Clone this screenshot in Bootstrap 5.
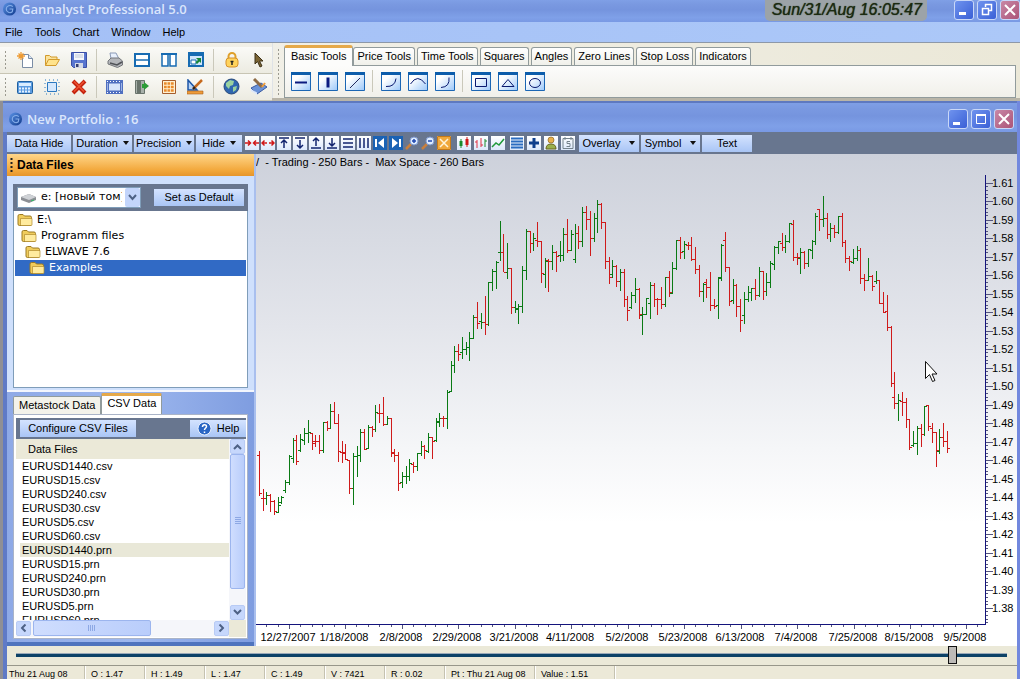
<!DOCTYPE html>
<html lang="en">
<head>
<meta charset="utf-8">
<meta name="viewport" content="width=device-width, initial-scale=1">
<title>Gannalyst Professional 5.0</title>
<link href="https://cdn.jsdelivr.net/npm/bootstrap@5.3.0/dist/css/bootstrap.min.css" rel="stylesheet">
<style>
:root{--slate:#68768f;--beige:#ebe9d8;--edge:#7f9db9}
body{font-family:"Liberation Sans",Arial,sans-serif;font-size:11px;line-height:14px;color:#000;background:var(--beige)}
button,select,input{font:inherit;color:inherit}
button{border:0;background:none;padding:0;white-space:nowrap}
svg{display:block;flex:none}
.caption{background:linear-gradient(#7f9fe6 0,#7a99e1 18%,#7594de 45%,#7fa0e8 80%,#7999e4 100%);color:#dbe6fc;font:600 13px/16px "Open Sans","Trebuchet MS",sans-serif}
.cap-main{height:22px;padding-left:2px}
.cap-child{height:32px;padding:3px 3px 0 8px;border-top:2px solid #5e79c0}
.stamp{background:#9ca3a8;border-radius:0 0 5px 5px;color:#1b2a10;font:italic 16px/20px "Liberation Sans",sans-serif;height:21px;padding:0 5px 0 7px;margin-right:27px;text-shadow:0 0 1px #1b2a10;white-space:nowrap}
.winbtn{width:20px;height:20px;border:1px solid #c9d8f8;border-radius:3px;background:linear-gradient(135deg,#6f93ee,#3a60d6)}
.winbtn.shut{background:linear-gradient(135deg,#c888a6,#ac5478)}
.menubar{height:20px;background:linear-gradient(90deg,#a4c0f6,#acc8f8);padding-left:5px;gap:12px}
.menubar a{color:#000;text-decoration:none;line-height:20px}
.tooldock{height:59px;border-top:1px solid #8d98a8;border-bottom:3px solid #b9b5a8;background:linear-gradient(90deg,#f3f2ec,#ebe8d8)}
.toolrow{height:27px;padding-left:4px;border-bottom:1px solid #c8c5b4;background:linear-gradient(#fafaf7,#ecebe1)}
.grip{width:3px;height:20px;background:radial-gradient(circle,#9a998f 1px,transparent 1px) 0 0/3px 4px}
.tool{width:27px;height:26px;display:flex;align-items:center;justify-content:center}
.vline{width:1px;height:22px;background:#cac8ba;margin:0 4px}
.tooltabs{padding:1px 4px 0 4px}
.tabline{height:21px;gap:2px}
.ttab{height:18px;border:1px solid #919b9c;border-bottom:0;border-radius:3px 3px 0 0;background:linear-gradient(#fff,#f0f0ea);padding:0 3px}
.ttab.on{height:21px;background:#fcfcfb;border-top:3px solid #e5a94a;margin-bottom:-1px;padding:0 6px 2px;position:relative}
.ttab.on + .ttab{margin-left:-2px}
.toolpane{border:1px solid #919b9c;background:linear-gradient(#fcfcfb,#f1f0ea);height:33px;padding-left:2px}
.childwin{border-left:3px solid #8f8f95;border-right:3px solid #7288de;background:#5f7ac6;min-height:0}
.inner{margin-left:4px;min-height:0}
.slatebar{background:var(--slate);height:22px;gap:2px}
.xpbtn{height:17px;background:linear-gradient(#d4e3ff,#a9c5f5);display:flex;align-items:center;justify-content:center;gap:5px}
.caret{border:3px solid transparent;border-top:4px solid #111;border-bottom:0}
.mini{width:14px;height:14px;background:linear-gradient(#fff,#dce8fb);display:flex;align-items:center;justify-content:center}
.mini.bare{background:none}
.side{width:249px;background:linear-gradient(90deg,#8ea9e6,#9db7ee 50%,#7f9de0);border-right:2px solid #a9bfee;min-height:0}
.sidehead{height:22px;background:linear-gradient(#ffd68a,#f2a73a 75%,#e6952b);font:bold 12px/22px "Liberation Sans",sans-serif;padding-left:3px;gap:4px}
.drivebox{background:#cfe0fc;padding:8px 6px 2px}
.drivebar{height:27px;background:var(--slate);padding:0 4px}
.drive{width:124px;height:21px;position:relative}
.drive select{appearance:none;width:100%;height:21px;border:1px solid var(--edge);border-radius:0;background:#fff;padding:0 18px 0 23px;font:11px/18px "DejaVu Sans",Verdana,sans-serif}
.drive .disk{position:absolute;left:3px;top:5px;pointer-events:none}
.drive .drop{position:absolute;right:1px;top:1px;pointer-events:none}
.tree{height:177px;background:#fff;border:1px solid var(--edge);border-top:0;padding:1px;font:11px/16px "DejaVu Sans",Verdana,sans-serif}
.tree button{display:flex;align-items:center;gap:4px;width:100%;height:16px}
.tree .l0{padding-left:2px}.tree .l1{padding-left:6px}.tree .l2{padding-left:10px}.tree .l3{padding-left:14px}
.tree .sel{background:#316ac5;color:#fff}
.lower{padding:1px 6px 3px;min-height:0;border-top:2px solid #f3f6fd;border-bottom:4px solid #4f74be}
.dtab{background:#f3f2ea;border:1px solid #919b9c;border-bottom:0;border-radius:2px 2px 0 0;height:18px;padding:0 5px}
.dtab.on{background:#fff;border-top:3px solid #e5a94a;height:21px;padding:0 5px 4px}
.sheet{background:#fff;border:1px solid #aab4c8;padding:3px 1px 1px 2px;min-height:0}
.files{width:100%;border-collapse:collapse}
.files th{background:var(--beige);height:20px;font-weight:400;padding:0 12px;text-align:left}
.files td{height:14px;padding:0 6px;line-height:14px}
.files .sel{background:linear-gradient(#e9e8d8,#e9e8d8) 4px 0 no-repeat}
.sb{background:#f5f6fa}
.sbtn{width:15px;height:15px;border-radius:2px;border:1px solid #b8cbf5;background:#c6d7fc;display:flex;align-items:center;justify-content:center}
.thumb{background:linear-gradient(90deg,#cfddfe,#b9cdfb);border:1px solid #9cb5ee;border-radius:2px;display:flex;align-items:center;justify-content:center}
.chart{background:linear-gradient(#cdd1db,#e3e5eb 35%,#f5f6f8 60%,#fff 75%);min-width:0;overflow:hidden}
.chart text{font:11px "Liberation Sans",sans-serif}
.slide{height:21px;padding:0 10px 0 9px;border-bottom:1px solid #98978a;background:var(--beige)}
.slide input{appearance:none;width:100%;height:18px;margin:0;background:linear-gradient(#9aa9b8,#9aa9b8) 0 7px/100% 1px no-repeat,linear-gradient(#0d4267,#0d4267) 0 8px/100% 3px no-repeat;display:block}
.slide input::-webkit-slider-thumb{appearance:none;width:9px;height:18px;background:#bdbbb8;border:1px solid #111;border-radius:0}
.stat{height:13px;overflow:hidden;background:#ece9d8;padding-left:2px;font:9px/16px "Liberation Sans",sans-serif;white-space:nowrap}
.stat span{width:60px;padding-left:6px;border-left:1px solid #c5c2b0;box-shadow:inset 1px 0 #fff;flex:none;height:16px}
.stat .day{width:75px;padding-left:0;border:0;box-shadow:none}
</style>
</head>
<body class="vh-100 overflow-hidden d-flex flex-column">
<svg width="0" height="0" class="position-absolute">
<defs>
<linearGradient id="ball" x1="0" y1="0" x2="1" y2="1"><stop offset="0" stop-color="#5b93e6"/><stop offset="1" stop-color="#103a8c"/></linearGradient>
<linearGradient id="tile" x1="0" y1="0" x2="1" y2="1"><stop offset=".3" stop-color="#fff"/><stop offset="1" stop-color="#9cc8fa"/></linearGradient>
<symbol id="logo" viewBox="0 0 16 16"><circle cx="8" cy="8" r="7" fill="url(#ball)"/><path d="M11.500 5.500C9 3 4.500 4.500 4.500 8s4 5 6.500 3l.5-3H8" fill="none" stroke="#86aeea" stroke-width="1.200"/></symbol>
<symbol id="frame" viewBox="0 0 20 19"><path d="M.5.500h19v18H.5z" fill="url(#tile)" stroke="#1b66b4"/><path d="M0 0h20v3H0z" fill="#0d5dab"/></symbol>
<symbol id="folder" viewBox="0 0 16 14"><path d="M1 3q0-1.500 1.500-1.500h3.500l1.500 1.500H13q1.500 0 1.500 1.500V11q0 1.500-1.500 1.500H2.500Q1 12.500 1 11z" fill="#f0cc5c" stroke="#9c7a22"/><path d="M3.500 5.500h11.500v6q0 1-1 1H4.500q-1 0-1-1z" fill="#ffeb9e" stroke="#b08a2c" stroke-width=".7"/></symbol>
<symbol id="up" viewBox="0 0 9 6"><path d="M1 5l3.500-3.500L8 5" fill="none" stroke="#4d6185" stroke-width="2"/></symbol>
</defs>
</svg>

<header class="caption cap-main d-flex align-items-start flex-none">
  <div class="d-flex align-items-center gap-1 me-auto pt-0"><svg width="15" height="18"><use href="#logo"/></svg><span>Gannalyst Professional 5.0</span></div>
  <div class="stamp">Sun/31/Aug 16:05:47</div>
  <div class="d-flex" style="gap:3px">
    <button class="winbtn" aria-label="Minimize"><svg width="18" height="18"><path d="M4 11h7v3H4z" fill="#fff"/></svg></button>
    <button class="winbtn" aria-label="Restore"><svg width="18" height="18"><path d="M7.500 6V3.500h6v6H11M4.500 7.500h6v6h-6z" fill="none" stroke="#fff" stroke-width="1.500"/></svg></button>
    <button class="winbtn shut" aria-label="Close"><svg width="18" height="18"><path d="M4 4l10 10M14 4L4 14" stroke="#fff" stroke-width="2"/></svg></button>
  </div>
</header>
<nav class="menubar d-flex"><a href="#">File</a><a href="#">Tools</a><a href="#">Chart</a><a href="#">Window</a><a href="#">Help</a></nav>

<div class="tooldock d-flex">
  <div class="border-end pt-1">
    <div class="toolrow d-flex align-items-center">
      <div class="grip me-1"></div>
      <button class="tool" aria-label="New"><svg width="16" height="16"><path d="M5.500 2.500h6l4 4v9h-10z" fill="#fff" stroke="#7b8da5"/><path d="M11.500 2.500v4h4" fill="#dbe6f5" stroke="#7b8da5"/><path d="M4 0v8M0 4h8M1.500 1.500l5 5M6.500 1.500l-5 5" stroke="#ee9b33" stroke-width="1.300"/></svg></button>
      <button class="tool" aria-label="Open"><svg width="16" height="16"><path d="M1.500 13.500V3.500h4l1.500 1.500h6v2.500" fill="#fbe29a" stroke="#d29a2c"/><path d="M1.500 13.500l3-6h11l-3.500 6z" fill="#ffe38c" stroke="#d29a2c"/></svg></button>
      <button class="tool" aria-label="Save"><svg width="16" height="16"><path d="M.5.500h15v15H2.500l-2-2z" fill="#5875cf" stroke="#3b4fa5"/><path d="M3 1h10v7H3z" fill="#f5f7fb"/><path d="M4 3h8M4 5h8" stroke="#c0c8d8"/><path d="M4 11h8v5H4z" fill="#d5d9e6"/><path d="M5 12h2.500v3H5z" fill="#333d70"/></svg></button>
      <div class="vline"></div>
      <button class="tool" aria-label="Print"><svg width="16" height="16"><path d="M4 7l-1-6h6l3 6z" fill="#e8f0fd" stroke="#8a99b5"/><path d="M1 9l3-3h8l3.500 3v4l-5 2.500L1 12z" fill="#b4b6ba" stroke="#74767a"/><path d="M3 11l7 2 5-3" fill="none" stroke="#505257" stroke-width="1.500"/></svg></button>
      <button class="tool" aria-label="Split rows"><svg width="16" height="14"><path d="M1 1h14v12H1z" fill="#fff" stroke="#176bb2" stroke-width="2"/><path d="M1 7h14" stroke="#176bb2" stroke-width="1.500"/></svg></button>
      <button class="tool" aria-label="Split columns"><svg width="16" height="14"><path d="M1 1h6v12H1zM9 1h6v12H9z" fill="#fff" stroke="#176bb2" stroke-width="1.500"/><path d="M0 1h16" stroke="#176bb2" stroke-width="2"/></svg></button>
      <button class="tool" aria-label="Cascade"><svg width="16" height="15"><path d="M1 1h14v13H1z" fill="#cfe5fb" stroke="#176bb2" stroke-width="2"/><path d="M0 2h16" stroke="#176bb2" stroke-width="4"/><path d="M3 8h5v4H3z" fill="#fff" stroke="#176bb2"/><path d="M8 6h5v5l-1.500-1.500L9 12 7.500 10 10 8z" fill="#16863a"/></svg></button>
      <div class="vline"></div>
      <button class="tool" aria-label="Lock"><svg width="14" height="16"><path d="M3.500 7V4.500a3.500 3.500 0 017 0V7" fill="none" stroke="#dfa02a" stroke-width="2"/><rect x="1" y="6" width="12" height="9" rx="3" fill="#ffd35c" stroke="#d6912a"/><path d="M7 9v4M5.500 9.500h3" stroke="#222" stroke-width="1.500"/></svg></button>
      <button class="tool" aria-label="Select"><svg width="12" height="16"><path d="M2 1v11l2.500-2.500L7 15l2-1-2.500-5H10z" fill="#7a6433" stroke="#3d3118"/></svg></button>
    </div>
    <div class="toolrow d-flex align-items-center">
      <div class="grip me-1"></div>
      <button class="tool" aria-label="Calculator"><svg width="16" height="14"><rect x=".5" y="1.500" width="15" height="12" rx="1" fill="#5b9be0" stroke="#20609f"/><path d="M2 3h12v3H2z" fill="#d9edff"/><path d="M2 8.500h12M2 11.500h12" stroke="#e3f1ff" stroke-width="2" stroke-dasharray="2 1"/></svg></button>
      <button class="tool" aria-label="Region"><svg width="16" height="16"><path d="M3.500 3.500h9v9h-9z" fill="#d5e8fd" stroke="#2a78c0"/><path d="M1 1h14v14H1z" fill="none" stroke="#2a78c0" stroke-dasharray="1 3"/></svg></button>
      <button class="tool" aria-label="Delete"><svg width="16" height="16"><path d="M2 2l12 12M14 2L2 14" stroke="#c4240f" stroke-width="4"/><path d="M3 2.500l10 10M13 2.500l-10 10" stroke="#ee5030" stroke-width="1.500"/></svg></button>
      <div class="vline"></div>
      <button class="tool" aria-label="Film"><svg width="17" height="14"><path d="M0 0h17v14H0z" fill="#4f6fc0"/><path d="M3 3.500h11v7H3z" fill="#d7e5fb"/><path d="M1 1.500h15M1 12.500h15" stroke="#fff" stroke-dasharray="1 2"/><path d="M1.500 3v8M15.500 3v8" stroke="#9fb4e4"/></svg></button>
      <button class="tool" aria-label="Exit"><svg width="15" height="16"><path d="M1.500 1.500h9v13h-9z" fill="#a8b0aa" stroke="#69736b"/><path d="M3 2h4v12l-4 1z" fill="#69736b"/><path d="M8 5h2V3l5 4-5 4V9H8z" fill="#2c9c37"/></svg></button>
      <button class="tool" aria-label="Grid"><svg width="14" height="14"><path d="M.5.500h13v13H.5z" fill="#fff1d2" stroke="#a65d2b"/><path d="M2 3.500h10M2 7h10M2 10.500h10" stroke="#e98a2c" stroke-width="2.500" stroke-dasharray="2.700 .8"/></svg></button>
      <button class="tool" aria-label="Draw"><svg width="17" height="16"><path d="M1 1v10h9z" fill="#b7d3f5" stroke="#1c55a6" stroke-width="1.500"/><path d="M15 1L6 10" stroke="#c66a1e" stroke-width="2.500"/><path d="M8 8l-2 2" stroke="#222" stroke-width="2"/><path d="M0 12h16v3H0z" fill="#ee9c3a" stroke="#a85f1b" stroke-width=".6"/></svg></button>
      <div class="vline"></div>
      <button class="tool" aria-label="Web"><svg width="17" height="17"><circle cx="8.500" cy="8.500" r="7.500" fill="#2f66b0" stroke="#294a78"/><path d="M3 5l4-3 4 1-1 4-3 1-1 3-3-3zM10 9l4-1-1 4-3 2z" fill="#9ad2a0"/></svg></button>
      <button class="tool" aria-label="Notebook"><svg width="18" height="17"><path d="M1 10l10-5 6 4-10 7z" fill="#6b93d8" stroke="#3a5ba2"/><path d="M1 11v2l6 3.500v-2z" fill="#dbe7fb"/><path d="M4 1l8 8" stroke="#8e6b45" stroke-width="3"/><path d="M12 9l3-4" stroke="#ee9c3a" stroke-width="2"/></svg></button>
    </div>
  </div>
  <div class="tooltabs d-flex flex-grow-1">
    <div class="grip mt-1 me-1" style="height:48px"></div>
    <div class="flex-grow-1">
      <div class="tabline d-flex align-items-end">
        <button class="ttab on">Basic Tools</button><button class="ttab">Price Tools</button><button class="ttab">Time Tools</button><button class="ttab">Squares</button><button class="ttab">Angles</button><button class="ttab">Zero Lines</button><button class="ttab">Stop Loss</button><button class="ttab">Indicators</button>
      </div>
      <div class="toolpane d-flex align-items-center" id="shapes"></div>
    </div>
  </div>
</div>

<main class="childwin d-flex flex-column flex-grow-1">
  <div class="caption cap-child d-flex align-items-center">
    <svg width="15" height="16" class="me-1" style="margin-left:-3px"><use href="#logo"/></svg><span class="me-auto">New Portfolio : 16</span>
    <div class="d-flex" style="gap:3px">
      <button class="winbtn" aria-label="Minimize chart"><svg width="18" height="18"><path d="M4 12h7v3H4z" fill="#fff"/></svg></button>
      <button class="winbtn" aria-label="Maximize chart"><svg width="18" height="18"><path d="M4.500 4.500h9v9h-9z" fill="none" stroke="#fff"/><path d="M4 5h10" stroke="#fff" stroke-width="2"/></svg></button>
      <button class="winbtn shut" aria-label="Close chart"><svg width="18" height="18"><path d="M4 4l10 10M14 4L4 14" stroke="#fff" stroke-width="2"/></svg></button>
    </div>
  </div>
  <div class="inner d-flex flex-column flex-grow-1">
    <div class="slatebar d-flex align-items-center">
      <button class="xpbtn" style="width:64px">Data Hide</button>
      <button class="xpbtn" style="width:59px">Duration <i class="caret"></i></button>
      <button class="xpbtn" style="width:60px">Precision <i class="caret"></i></button>
      <button class="xpbtn" style="width:46px">Hide <i class="caret"></i></button>
      <div class="d-flex" id="minis" style="gap:2px;margin:0 4px 0 1px"></div>
      <div class="d-flex" id="minis2" style="gap:3px;margin-right:3px"></div>
      <div class="d-flex" id="minis3" style="gap:3px;margin-right:2px"></div>
      <button class="xpbtn" style="width:60px">Overlay <i class="caret ms-1"></i></button>
      <button class="xpbtn" style="width:59px">Symbol <i class="caret ms-1"></i></button>
      <button class="xpbtn" style="width:50px">Text</button>
    </div>
    <div class="d-flex flex-grow-1" style="min-height:0">
      <aside class="side d-flex flex-column flex-shrink-0">
        <div class="sidehead d-flex align-items-center"><svg width="3" height="15"><path d="M1.500 1v14" stroke="#222" stroke-width="2" stroke-dasharray="2 2"/></svg>Data Files</div>
        <div class="drivebox">
          <div class="drivebar d-flex align-items-center justify-content-between">
            <div class="drive">
              <select aria-label="Drive"><option>e: [новый том]</option></select>
              <svg class="disk" width="17" height="12"><path d="M1 5l8-3 7 3v3l-7 3-8-3z" fill="#8c8f94"/><path d="M1 5l8-3 7 3-7 3z" fill="#cfd2d6"/><path d="M11 9l3-1" stroke="#3b6" stroke-width="1"/></svg>
              <svg class="drop" width="15" height="19"><rect width="15" height="19" rx="2" fill="#c3d5fb"/><path d="M4 7l3.500 4L11 7" fill="none" stroke="#4d6185" stroke-width="2"/></svg>
            </div>
            <button class="xpbtn" style="width:90px">Set as Default</button>
          </div>
          <div class="tree">
            <button class="l0"><svg width="16" height="14"><use href="#folder"/></svg>E:\</button>
            <button class="l1"><svg width="16" height="14"><use href="#folder"/></svg>Programm files</button>
            <button class="l2"><svg width="16" height="14"><use href="#folder"/></svg>ELWAVE 7.6</button>
            <button class="l3 sel"><svg width="16" height="14"><use href="#folder"/></svg>Examples</button>
          </div>
        </div>
        <div class="lower d-flex flex-column flex-grow-1">
          <div class="d-flex align-items-end"><button class="dtab">Metastock Data</button><button class="dtab on">CSV Data</button></div>
          <div class="sheet d-flex flex-column flex-grow-1">
            <div class="slatebar d-flex align-items-center justify-content-between" style="padding-left:4px">
              <button class="xpbtn" style="width:116px">Configure CSV Files</button>
              <button class="xpbtn" style="width:56px"><svg width="15" height="15"><circle cx="7.500" cy="7.500" r="6.500" fill="#2a66c4" stroke="#e8f0fd"/><path d="M5.500 6c0-3 4-3 4-.5 0 1.500-2 1.500-2 3.500M7.500 10.500v1.500" fill="none" stroke="#fff" stroke-width="1.500"/></svg>Help</button>
            </div>
            <div class="d-flex flex-grow-1 overflow-hidden" style="min-height:0">
              <div class="flex-grow-1 overflow-hidden d-flex flex-column">
              <div class="flex-grow-1 overflow-hidden">
                <table class="files"><thead><tr><th>Data Files</th></tr></thead><tbody>
                <tr><td>EURUSD1440.csv</td></tr><tr><td>EURUSD15.csv</td></tr><tr><td>EURUSD240.csv</td></tr><tr><td>EURUSD30.csv</td></tr><tr><td>EURUSD5.csv</td></tr><tr><td>EURUSD60.csv</td></tr>
                <tr><td class="sel">EURUSD1440.prn</td></tr><tr><td>EURUSD15.prn</td></tr><tr><td>EURUSD240.prn</td></tr><tr><td>EURUSD30.prn</td></tr><tr><td>EURUSD5.prn</td></tr><tr><td>EURUSD60.prn</td></tr>
                </tbody></table>
              </div>
              <div class="sb d-flex align-items-center" style="height:17px">
                <div class="sbtn"><svg width="9" height="6" style="rotate:-90deg"><use href="#up"/></svg></div>
                <div class="thumb" style="width:118px;height:16px;margin-left:2px"><svg width="8" height="6"><path d="M.5 0v6M2.500 0v6M4.500 0v6M6.500 0v6" stroke="#8da8e4"/></svg></div>
                <div class="sbtn ms-auto"><svg width="9" height="6" style="rotate:90deg"><use href="#up"/></svg></div>
              </div>
              </div>
              <div class="sb d-flex flex-column align-items-center" style="width:17px">
                <div class="sbtn"><svg width="9" height="6"><use href="#up"/></svg></div>
                <div class="thumb flex-grow-1 mb-3" style="width:15px"><svg width="6" height="8"><path d="M0 .5h6M0 2.500h6M0 4.500h6M0 6.500h6" stroke="#8da8e4"/></svg></div>
                <div class="sbtn"><svg width="9" height="6" style="rotate:180deg"><use href="#up"/></svg></div>
                <div style="height:17px;width:17px;background:#ebe9d8"></div>
              </div>
            </div>
          </div>
        </div>
      </aside>
      <section class="chart flex-grow-1"><svg id="plot" width="100%" height="100%" viewBox="0 0 761 490" preserveAspectRatio="xMinYMin meet" role="img" aria-label="Price chart"></svg></section>
    </div>
    <div class="slide"><input type="range" min="0" max="1000" value="949" aria-label="Scroll chart"></div>
    <footer class="stat d-flex"><span class="day">Thu 21 Aug 08</span><span>O : 1.47</span><span>H : 1.49</span><span>L : 1.47</span><span>C : 1.49</span><span>V : 7421</span><span>R : 0.02</span><span style="width:90px">Pt : Thu 21 Aug 08</span><span style="width:80px">Value : 1.51</span><span></span></footer>
  </div>
</main>

<script>
// Drawing tools of the "Basic Tools" tab
const shapes = [
  ['Horizontal line','<path d="M4 10.500h12" stroke="#0a1a80" stroke-width="2"/>'],
  ['Vertical line','<path d="M10 5.500v10" stroke="#0a1a80" stroke-width="3"/>'],
  ['Trend line','<path d="M5 16L15 6" stroke="#222a60"/>'],
  null,
  ['Arc','<path d="M5 14.500q9 .5 10-8" fill="none" stroke="#0a1a70"/>'],
  ['Half circle','<path d="M2.500 12q7-11 15 0" fill="none" stroke="#0a1a70"/>'],
  ['Quarter arc','<path d="M6 15.500q9-.5 8-10" fill="none" stroke="#0a1a70"/>'],
  null,
  ['Rectangle','<path d="M4.500 6.500h11v8h-11z" fill="none" stroke="#0a1a70"/>'],
  ['Triangle','<path d="M4 14.500h12L10 7.500z" fill="none" stroke="#0a1a70"/>'],
  ['Ellipse','<ellipse cx="10" cy="11" rx="5.500" ry="4.500" fill="none" stroke="#0a1a70"/>']];
document.getElementById('shapes').innerHTML = shapes.map(s => s
  ? `<button class="tool" aria-label="${s[0]}"><svg width="20" height="19"><use href="#frame"/>${s[1]}</svg></button>`
  : '<div class="vline"></div>').join('');

const mini = (inner, bare) => `<button class="mini${bare ? ' bare' : ''}" aria-label="Chart tool"><svg width="14" height="14">${inner}</svg></button>`;
const N = 'stroke="#12246e" stroke-width="1.500" fill="none"', R = 'stroke="#d01818" stroke-width="1.500" fill="none"';
const nav = d => `<path d="M0 0h14v14H0z" fill="#1a62b4"/>${d}`;
const lens = s => `<path d="M1 13l5-5" stroke="#c9803e" stroke-width="2.500"/><circle cx="9" cy="5" r="4" fill="#dcebff" stroke="#7d97cc"/><path d="${s}" stroke="#2048b0" stroke-width="1.500"/>`;
document.getElementById('minis').innerHTML = [
  mini(`<path d="M0 7h5M3 4.500L5.500 7 3 9.500M14 7H9M11 4.500L8.500 7l2.500 2.500" ${R}/>`),
  mini(`<path d="M1 7h5M3.500 4.500L1 7l2.500 2.500M13 7H8M10.500 4.500L13 7l-2.500 2.500" ${R}/>`),
  mini(`<path d="M2 2h10M7 12V4M4 7l3-3 3 3" ${N}/>`),
  mini(`<path d="M2 2h10M7 4v8M4 9l3 3 3-3" ${N}/>`),
  mini(`<path d="M2 12h10M7 10V2M4 5l3-3 3 3" ${N}/>`),
  mini(`<path d="M2 12h10M7 2v8M4 7l3 3 3-3" ${N}/>`),
  mini(`<path d="M2 3h10M2 7h10M2 11h10" ${N}/>`),
  mini(`<path d="M3 2v10M7 2v10M11 2v10" ${N}/>`),
  mini(nav('<path d="M3 3v8" stroke="#fff" stroke-width="2"/><path d="M11 2v10L5 7z" fill="#fff"/>')),
  mini(nav('<path d="M11 3v8" stroke="#fff" stroke-width="2"/><path d="M3 2v10l6-5z" fill="#fff"/>')),
  mini(lens('M7 5h4M9 3v4'), 1), mini(lens('M7 5h4'), 1),
  mini('<path d="M.5.500h13v13H.5z" fill="#f0a83c" stroke="#c67a18"/><path d="M3 3l8 8M11 3l-8 8" stroke="#fff4da" stroke-width="1.500"/>')].join('');
document.getElementById('minis2').innerHTML = [
  mini('<path d="M4 3v9" stroke="#1a8a2c"/><path d="M2.500 5h3v5h-3z" fill="#1a8a2c"/><path d="M10 1v10" stroke="#d01818"/><path d="M8.500 3h3v6h-3z" fill="#d01818"/>'),
  mini('<path d="M3 4v8M1 6h2M7 2v9M7 9h2" stroke="#d34" fill="none"/><path d="M11 3v8M11 5h2" stroke="#1a8a2c"/>'),
  mini('<path d="M1 11l4-4 3 2 5-6" fill="none" stroke="#1f9a3a" stroke-width="1.500"/>')].join('');
document.getElementById('minis3').innerHTML = [
  mini('<path d="M1 2.500h12M1 5.500h12M1 8.500h12M1 11.500h12" stroke="#2a6cc0" stroke-width="2"/>'),
  mini('<path d="M7 2v10M2 7h10" stroke="#0e3f8c" stroke-width="3"/>'),
  mini('<circle cx="7" cy="4" r="3" fill="#e8b04c" stroke="#8c6420" stroke-width=".7"/><path d="M2 13q0-5 5-5t5 5z" fill="#9ab04c" stroke="#6b6420"/>'),
  mini('<path d="M2 2.500h10v10H2zM4 1v3M10 1v3M9 5.500H6v2h3v3H5.500" fill="none" stroke="#75838c"/>')].join('');

// Daily bars: colour, high, low, open, close in thirds of a pixel below the base line
const series = [[678, `r213,347,226,341 r328,392,356,356 g336,376,354,346 r342,396,346,364 r360,404,364,395 g352,400,398,375 g348,372,368,351 g300,340,332,307 g226,316,307,230 g174,250,234,181 r166,254,181,244 g163,217,211,178 g143,196,182,159 g121,190,160,158 r160,211,159,190 r166,202,184,184 r166,222,184,211 g126,219,211,128 r123,153,128,145 g72,144,144,94 r66,133,94,130 r102,247,130,213 r184,250,217,217 r193,240,220,238 r240,343,240,325 g219,374,325,228 g199,292,230,226 g147,247,226,158 r147,211,158,207 g136,208,205,141 r138,170,141,147 g76,156,148,98 r73,130,99,99 r51,139,100,132 g109,136,132,115 r115,232,115,218 r208,247,220,226 r216,332,226,310 g277,325,308,289 g258,311,289,290 g237,303,290,250 r246,279,253,260 g219,272,260,220 g183,228,219,198 r196,238,199,211 g160,220,214,171 r171,236,171,183 g114,187,182,124 g98,141,126,114 r108,140,114,115`],
[78, `g630,746,715,636 g543,637,634,556 g498,580,556,514 r492,543,515,523 g471,536,516,508 g486,526,508,502 g456,542,502,475 g405,478,475,412 r366,448,412,431 g399,448,423,427 r348,466,427,433 g307,437,434,308 g267,332,308,274 g243,326,274,247 g123,242,217,217 r162,277,217,277 g189,298,277,265 r265,401,265,382 g363,400,383,384 g372,433,388,379 g258,398,379,271 g147,299,271,153 r153,218,154,190 g159,212,190,176 r126,202,180,184 r184,310,184,281 g234,325,284,243 r237,337,242,244 g195,270,243,217 r214,276,218,229 g183,247,226,226 g144,244,226,162 r117,220,163,211 g150,213,211,163 g133,250,238,160 r138,206,160,184 g80,200,184,97 r78,151,98,118 r93,227,118,175 g99,186,175,115 g60,160,115,73 r68,146,73,127 r126,268,127,244 r231,313,244,292 g240,293,283,258 r256,322,258,304 g267,334,304,276 r267,382,276,358 r348,422,358,392 g337,388,382,346 g294,370,346,327 r324,418,327,403 g382,464,406,403 g355,404,403,355 g307,418,370,316 r309,382,317,358 r354,405,358,358 r321,388,358,374 g292,381,374,292 r273,352,292,338 g247,343,339,264 g181,271,264,181 r172,238,181,217 g184,236,214,193 r187,211,196,196 r172,244,196,238 r202,283,238,267 r256,352,267,334 g309,367,334,313 r297,353,308,323 r277,394,322,376 r357,388,376,378 g292,418,377,292 g193,303,295,196 r157,277,181,262 r262,379,262,363 g298,373,362,316 r312,412,316,378 r357,455,378,421 g337,431,406,357 g319,367,357,337 g325,362,337,325 r298,360,325,346 g262,350,346,273 r272,361,273,334 g280,348,334,307 g244,325,307,251 g199,271,253,201 g184,222,201,184 r160,214,190,202 g166,220,202,184 g129,190,184,130 r121,244,132,232 r220,256,232,233 g205,283,235,217 r214,268,217,250 g207,262,250,208 g181,237,210,184 g99,196,184,108 r86,153,87,118 g48,142,118,116 r99,178,116,163 g130,187,163,144 r135,174,146,156 g109,162,156,109 r99,202,109,186 r181,250,187,235 r229,274,235,244 g208,253,246,234 g199,242,235,210 r205,313,211,295 r283,334,295,301 g235,304,301,288 r286,334,288,320 g273,313,304,301 r301,373,301,370 r337,400,370,396 r346,452,394,442 r439,622,442,610 r577,688,652,670 g643,724,670,660 r637,709,663,667 r655,745,667,718 r718,811,718,802 g754,802,796,790 g738,826,790,745 r733,802,745,763 g678,768,763,679 r676,754,677,739 r730,790,745,757 r757,860,757,811 g748,823,814,771 r730,801,771,784 r754,820,784,805`]];
const path = {r: '', g: ''};
let i = 0;
for (const [base, bars] of series) for (const bar of bars.split(' ')) {
  const [hi, lo, op, cl] = bar.slice(1).split(',').map(v => (+v + base) / 3);
  const x = Math.floor(3.4 + i++ * 3.76) + .5;
  path[bar[0]] += `M${x} ${hi}V${lo}M${x - 2.5} ${Math.floor(op) + .5}H${x}M${x} ${Math.floor(cl) + .5}H${x + 2}`;
}
let ticks = '', labels = '';
for (let n = 0; n <= 23; n++) {
  const y = Math.round(29 + n * 18.48) + .5;
  ticks += `M729 ${y}h8`;
  for (let k = 1; k < 5; k++) ticks += `M729 ${Math.round(y + k * 3.7) - .5}h3`;
  labels += `<text x="736" y="${y + 3.5}">${(1.61 - n / 100).toFixed(2)}</text>`;
}
'12/27/2007 1/18/2008 2/8/2008 2/29/2008 3/21/2008 4/11/2008 5/2/2008 5/23/2008 6/13/2008 7/4/2008 7/25/2008 8/15/2008 9/5/2008'.split(' ').forEach((d, n) => {
  const x = Math.round(33 + n * 56.45);
  ticks += `M${x + .5} 470v5`;
  for (let k = -2; k < 3; k++) if (x + k * 11.3 < 728) ticks += `M${Math.round(x + k * 11.3) + .5} 470v3`;
  labels += `<text x="${x - 1}" y="487" text-anchor="middle">${d}</text>`;
});
document.getElementById('plot').innerHTML = `<text x="0" y="12" xml:space="preserve">/  - Trading - 250 Bars -  Max Space - 260 Bars</text>
<g fill="none" shape-rendering="crispEdges"><path d="${path.g}" stroke="#0a7a14"/><path d="${path.r}" stroke="#cf1b1b"/>
<path d="${ticks}" stroke="#55557c"/><path d="M729.500 21V471M0 470.500H729" stroke="#14147c"/></g>${labels}
<path d="M669.500 207.500v17l4-4 3 7 2.500-1-3-6.500h5z" fill="#fff" stroke="#111"/>`;
</script>
<script src="https://cdn.jsdelivr.net/npm/bootstrap@5.3.0/dist/js/bootstrap.bundle.min.js"></script>
</body>
</html>
